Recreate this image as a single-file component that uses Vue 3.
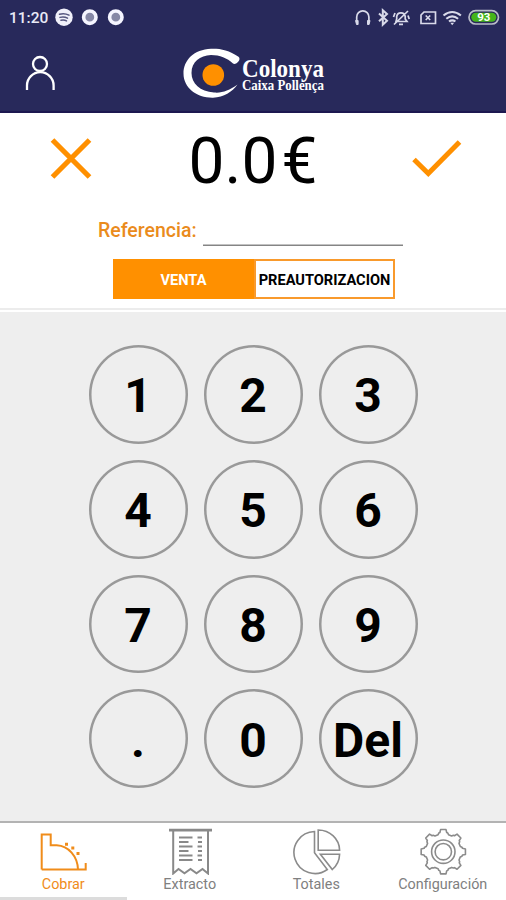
<template>
    <div class="page">
        <header class="top">
            <div class="status">
                <span class="time">11:20</span>
                <svg class="status-left" width="72" height="20" viewBox="0 0 72 20">
                    <circle cx="9" cy="9.2" r="8.7" fill="#f0f0fa" />
                    <path d="M4.5 6.2q5-1.500 9.500 1M5 9.400q4-1.200 7.500.8M6 12.300q3-.8 5.500.6" fill="none" stroke="#55567f" stroke-width="1.500" stroke-linecap="round" />
                    <circle cx="34.800" cy="9.200" r="6.200" fill="#8688a6" stroke="#f5f5ff" stroke-width="3.600" />
                    <circle cx="60.800" cy="9.200" r="6.200" fill="#8688a6" stroke="#f5f5ff" stroke-width="3.600" />
                </svg>
                <svg class="status-right" width="152" height="20" viewBox="0 0 152 20">
                    <g fill="none" stroke="#d9daea" stroke-width="1.700">
                        <path d="M5.700 14.500V9a6 6 0 0 1 12.200 0v5.500" />
                        <path d="M4.600 12.500h2.500v4H5.500zM16.500 12.500H19l-.9 4h-1.600z" fill="#d9daea" stroke-width="1" />
                        <path d="M28 5.500l8 7.300-4.200 3.900V2.300l4.200 3.700-8 7.300" stroke-width="2" />
                        <path d="M45 13.500h11l-1.800-2.500V8.500a4.300 4.300 0 0 0-8.500 0V11zM48 16.300h4M57 3L43 16.500M42.500 9l1.500-4M57 7.500l1.200 3.500" stroke-width="1.700" />
                        <path d="M73 4h11.500v11.500H70V7z" />
                        <path d="M74.700 7.500l4.500 4.500M79.200 7.500L74.700 12" stroke-width="1.600" />
                        <path d="M92.500 7.500q8.700-7 17.400 0M95.300 10.700q5.900-4.700 11.800 0M98 13.500q3.200-2.400 6.400 0" stroke-width="2.100" />
                        <path d="M99.300 14.800h3.800l-1.900 2.400z" fill="#d9daea" stroke="none" />
                        <rect x="118" y="2.600" width="29.500" height="13.400" rx="6.700" fill="#28295b" stroke="#b9bbc9" />
                    </g>
                    <rect x="120.300" y="4.800" width="25" height="9" rx="4.500" fill="#45b51b" />
                    <text x="132.800" y="13.300" class="battery">93</text>
                </svg>
            </div>
            <div class="brand">
                <svg class="user" width="32" height="38" viewBox="0 0 32 38" fill="none" stroke="#fff" stroke-width="2.300">
                    <circle cx="16" cy="11" r="7" />
                    <path d="M3 37v-4.500a13.300 13.300 0 0 1 26.600 0V37" />
                </svg>
                <svg class="logo" width="58" height="54" viewBox="0 0 58 54">
                    <path d="M58.500 10.800C49 4 40 2.500 31 2.800C14 3.500 3.500 14 3.500 27.500C3.500 42 17 52 33 51.700C44 51 52 46 57.500 38.500C49 44.500 42 47.300 34 46.500C20 45.500 11.500 37.500 11.500 27C11.500 16 20 9.500 31 9C40 9 47 12 53 17.500C55.500 19.500 62 14 58.500 10.800Z" fill="#fff" />
                    <circle cx="33.300" cy="29" r="10.800" fill="#ff9000" />
                </svg>
                <div class="brand-text">
                    <div class="name">Colonya</div>
                    <div class="sub">Caixa Pollença</div>
                </div>
            </div>
        </header>

        <section class="charge">
            <div class="total">
                <svg width="42" height="42" viewBox="0 0 42 42" fill="none" stroke="#ff9000" stroke-width="5.200">
                    <path d="M2.500 2l37 37M39.500 2l-37 37" />
                </svg>
                <div class="amount">{{ amount }}<span class="currency">€</span></div>
                <svg width="50" height="40" viewBox="0 0 50 40" fill="none" stroke="#ff9000" stroke-width="5">
                    <path d="M2 20.500l14.300 14L47.500 3" />
                </svg>
            </div>
            <div class="reference">
                <label for="ref">Referencia:</label>
                <input id="ref" v-model="reference" type="text">
            </div>
            <div class="mode">
                <button v-for="m in modes" :key="m" :class="{ active: m === mode }" @click="mode = m">{{ m }}</button>
            </div>
        </section>

        <main class="keypad">
            <button v-for="k in keys" :key="k" class="key" @click="press(k)">{{ k }}</button>
        </main>

        <nav class="tabs">
            <a class="tab active">
                <svg width="50" height="48" viewBox="0 0 50 48" fill="none" stroke="#f08c1a" stroke-width="2">
                    <path d="M3.700 42.500V7.500h9v10.800h6C30.500 19 39.500 29 40 42.500M3.700 42.500h44V36" />
                    <path d="M28.500 15.700v3M34.800 19.500v3M40 25v3" stroke-width="3" />
                </svg>
                <span>Cobrar</span>
            </a>
            <a class="tab">
                <svg width="50" height="48" viewBox="0 0 50 48" fill="none" stroke="#898989" stroke-width="2">
                    <path d="M4 3.200h43" stroke-width="2.800" />
                    <path d="M8.200 3v43.500l5.300-4.500 6 4.300 6-4.300 6 4.300 6-4.300 5.500 4.500V3" />
                    <path d="M14 10.500h13.500M14 15h9.500M14 19.500h13.500M14 24h9.500M14 28.500h13.500M14 33h13.500M32.500 10.500H37M33 15h4M32.500 19.500H37M33 24h4M32.500 28.500H37M33 33h4" stroke-width="2.200" />
                </svg>
                <span>Extracto</span>
            </a>
            <a class="tab">
                <svg width="50" height="48" viewBox="0 0 50 48" fill="none" stroke="#8b8b8b" stroke-width="1.600">
                    <path d="M23.500 4.500A21 21 0 1 0 36.300 42.500L23.500 25.700z" />
                    <path d="M27.200 3V23.200H48.600A21.400 20.500 0 0 0 27.200 3z" />
                    <path d="M29.400 27.200H48.600A21 21 0 0 1 41.300 42.500z" />
                </svg>
                <span>Totales</span>
            </a>
            <a class="tab">
                <svg width="50" height="48" viewBox="0 0 50 48" fill="none" stroke="#8b8b8b" stroke-width="1.600">
                    <path :d="gear" stroke-linejoin="round" />
                    <circle cx="25.300" cy="24.700" r="11.700" />
                    <circle cx="25.300" cy="24.700" r="8.200" />
                </svg>
                <span>Configuración</span>
            </a>
        </nav>
    </div>
</template>

<script setup>
import { ref } from 'vue'

const amount = ref('0.0')
const reference = ref('')
const modes = ['VENTA', 'PREAUTORIZACION']
const mode = ref('VENTA')
const keys = ['1', '2', '3', '4', '5', '6', '7', '8', '9', '.', '0', 'Del']

function press(key) {
    if (key === 'Del') {
        amount.value = amount.value.slice(0, -1) || '0.0'
        return
    }
    if (key === '.' && amount.value.includes('.') && amount.value !== '0.0') return
    amount.value = amount.value === '0.0' ? key : amount.value + key
}

// eight teeth, each one a list of [angle in degrees, radius]
const tooth = [[-17, 17.8], [-13.5, 19.2], [-10, 19.5], [-7, 22.3], [7, 22.3], [10, 19.5], [13.5, 19.2], [17, 17.8]]

function gearPath(cx, cy) {
    const points = []
    for (let i = 0; i < 8; i++) {
        for (const [deg, r] of tooth) {
            const a = (i * 45 + deg) * Math.PI / 180
            points.push(`${(cx + r * Math.cos(a)).toFixed(2)} ${(cy + r * Math.sin(a)).toFixed(2)}`)
        }
    }
    return `M${points.join('L')}Z`
}

const gear = gearPath(25.3, 24.7)
</script>

<style>
body {
    margin: 0;
}
</style>

<style scoped>
.page {
    position: relative;
    display: flex;
    flex-direction: column;
    width: 506px;
    height: 900px;
    overflow: hidden;
    background: #fff;
    font-family: Roboto, "Liberation Sans", sans-serif;
}

button {
    padding: 0;
    margin: 0;
    border: 0;
    background: none;
    font-family: inherit;
}

svg {
    display: block;
    flex: none;
}

.top {
    box-sizing: border-box;
    height: 113px;
    background: #28295b;
    border-bottom: 2px solid #1d1850;
}

.status {
    display: flex;
    align-items: center;
    height: 36px;
    padding: 0 3px 0 9px;
}

.time {
    width: 46px;
    color: #e9e9f6;
    font-size: 15.500px;
    font-weight: 500;
}

.status-right {
    margin-left: auto;
}

.battery {
    fill: #fff;
    font-size: 11.500px;
    font-weight: 700;
    text-anchor: middle;
}

.brand {
    display: flex;
    align-items: flex-start;
    padding: 10px 0 0 24px;
}

.user {
    margin-top: 7px;
}

.logo {
    margin-left: 124px;
    overflow: visible;
}

.brand-text {
    padding: 11px 0 0 4px;
    color: #fff;
    font-family: "Liberation Serif", serif;
    font-weight: 700;
    white-space: nowrap;
}

.name,
.sub {
    width: max-content;
    transform-origin: 0 0;
}

.name {
    font-size: 26px;
    line-height: 23px;
    transform: scaleX(.887);
}

.sub {
    font-size: 14px;
    line-height: 12px;
    transform: scaleX(.92);
}

.charge {
    box-sizing: border-box;
    height: 199px;
    border-bottom: 2px solid #fff;
    box-shadow: inset 0 -2px #ececec;
}

.total {
    display: flex;
    align-items: center;
    justify-content: space-between;
    height: 91px;
    padding: 0 44px 0 50px;
}

.amount {
    padding: 5px 0 0 2px;
    color: #000;
    font-size: 64px;
    line-height: 75px;
}

.currency {
    margin-left: 4px;
}

.reference {
    display: flex;
    align-items: flex-start;
    height: 55px;
    padding: 15px 0 0 98px;
    box-sizing: border-box;
}

.reference label {
    width: 105px;
    color: #ea8b1c;
    font-size: 19.500px;
    font-weight: 500;
    line-height: 24px;
}

.reference input {
    width: 200px;
    height: 27px;
    padding: 0;
    border: 0;
    box-shadow: inset 0 -1.600px #858585;
    outline: none;
    box-sizing: border-box;
}

.mode {
    display: flex;
    width: 282px;
    height: 40px;
    margin-left: 113px;
}

.mode button {
    flex: 1;
    padding-top: 1px;
    border: 2px solid #f99a2c;
    color: #000;
    font-size: 14.600px;
    font-weight: 700;
    white-space: nowrap;
}

.mode .active {
    border-color: #ff9000;
    background: #ff9000;
    color: #fff;
}

.keypad {
    display: grid;
    grid-template-columns: repeat(3, 99px);
    gap: 16px;
    align-content: start;
    justify-content: center;
    height: 509px;
    padding-top: 33px;
    box-sizing: border-box;
    background: #eee;
}

.key {
    height: 98.800px;
    padding-top: 4px;
    box-shadow: inset 0 0 0 2.500px #999;
    border-radius: 50%;
    color: #000;
    font-size: 48px;
    font-weight: 700;
    line-height: 56px;
}

.tabs {
    display: grid;
    grid-template-columns: repeat(4, 1fr);
    height: 79px;
    border-top: 2px solid #b3b3b3;
    box-sizing: border-box;
}

.tab {
    display: flex;
    flex-direction: column;
    align-items: center;
    padding-top: 4px;
    color: #808080;
    font-size: 14.400px;
    line-height: 19px;
}

.tab.active {
    color: #f08c1a;
}

.tabs::after {
    content: "";
    position: absolute;
    bottom: 0;
    left: 0;
    width: 127px;
    height: 3px;
    background: #dcdcdc;
}
</style>
